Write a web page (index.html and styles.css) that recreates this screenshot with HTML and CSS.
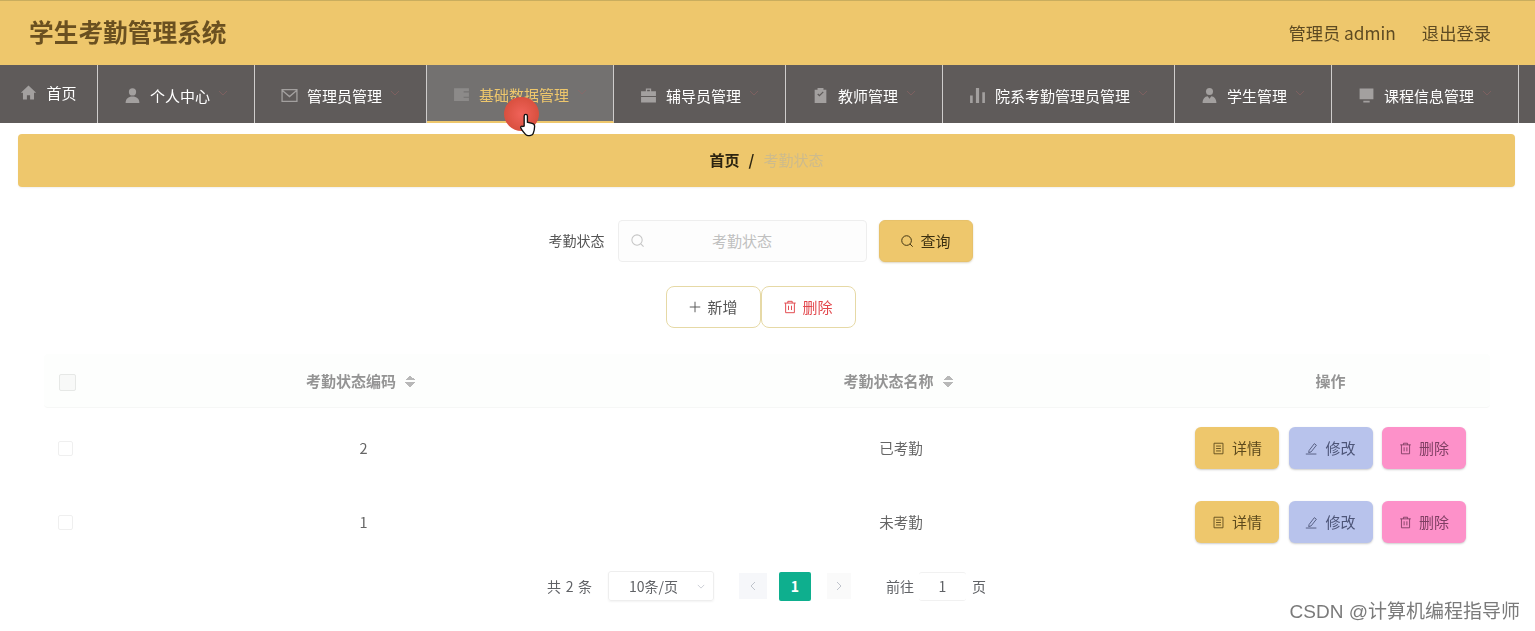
FILE: index.html
```html
<!DOCTYPE html>
<html lang="zh-CN">
<head>
<meta charset="utf-8">
<title>学生考勤管理系统</title>
<link rel="stylesheet" href="styles.css">
</head>
<body>
<svg class="sprite" aria-hidden="true">
  <symbol id="i-home" viewBox="0 0 16 16"><path fill="currentColor" d="M8 1.500 0.800 8.200h2V14.500h3.700v-4h3v4h3.700V8.200h2z"/></symbol>
  <symbol id="i-user" viewBox="0 0 16 16"><circle cx="8" cy="4.600" r="3.400" fill="currentColor"/><path fill="currentColor" d="M1.500 15c0-3.800 2.600-6 6.500-6s6.500 2.200 6.500 6z"/></symbol>
  <symbol id="i-mail" viewBox="0 0 16 16"><path fill="none" stroke="currentColor" stroke-width="1.200" d="M1 2.500h14v11H1zM1 3l7 6 7-6"/></symbol>
  <symbol id="i-data" viewBox="0 0 16 16"><path fill="currentColor" fill-rule="evenodd" d="M1 2h14v12H1zM10 5H15V6H10zM10 10H15V11H10z"/></symbol>
  <symbol id="i-case" viewBox="0 0 16 16"><path fill="currentColor" d="M5.500 1.500h5v2.500h4.500v4.500H1V4h4.500zM6.700 2.700V4h2.600V2.700zM1 9.500h14V14.500H1z"/></symbol>
  <symbol id="i-clip" viewBox="0 0 16 16"><path fill="currentColor" d="M2.500 2.500h2.700V1h5.600v1.500h2.700V15h-11zM5 7l2 2 4-4-.8-.8L7 7.400 5.800 6.200z"/></symbol>
  <symbol id="i-bars" viewBox="0 0 16 16"><path fill="currentColor" d="M1 8h2.500v7H1zM6.500 1h3v14h-3zM12.500 5H15v10h-2.500z"/></symbol>
  <symbol id="i-student" viewBox="0 0 16 16"><circle cx="8" cy="4.300" r="3.300" fill="currentColor"/><path fill="currentColor" d="M1.500 15c0-3.800 2-6 4.800-6.300L8 11l1.700-2.300c2.800.3 4.800 2.500 4.800 6.300z"/></symbol>
  <symbol id="i-screen" viewBox="0 0 16 16"><path fill="currentColor" d="M1.500 1.500h13v10h-13zM5 13h6v1.500H5z"/></symbol>
  <symbol id="i-search" viewBox="0 0 16 16"><circle cx="7.500" cy="7.500" r="5.500" fill="none" stroke="currentColor" stroke-width="1.100"/><path stroke="currentColor" stroke-width="1.100" d="m11.500 11.500 3 3"/></symbol>
  <symbol id="i-plus" viewBox="0 0 16 16"><path stroke="currentColor" stroke-width="1.100" d="M8 2v12M2 8h12"/></symbol>
  <symbol id="i-trash" viewBox="0 0 16 16"><path fill="none" stroke="currentColor" stroke-width="1.100" d="M1.500 3.500h13M5.500 3.500V1.500h5v2M3 3.500V14.500h10V3.500M6.300 6.500v5M9.700 6.500v5"/></symbol>
  <symbol id="i-doc" viewBox="0 0 16 16"><path fill="none" stroke="currentColor" stroke-width="1.100" d="M2.500 1.500h11v13h-11zM5 5h6M5 8h6M5 11h6"/></symbol>
  <symbol id="i-edit" viewBox="0 0 16 16"><path fill="none" stroke="currentColor" stroke-width="1.100" d="M5 10.500 11.500 2l2.500 2-6.500 8.200-3 .8zM1 14.800h13"/></symbol>
  <symbol id="i-chev" viewBox="0 0 10 6"><path fill="none" stroke="currentColor" stroke-width="1" d="m1 1 4 4 4-4"/></symbol>
</svg>

<header class="topbar">
  <h1 class="brand">学生考勤管理系统</h1>
  <div class="account">
    <span>管理员 admin</span>
    <a class="logout">退出登录</a>
  </div>
</header>

<nav class="menu">
  <a class="menu-item w-home"><svg class="mi"><use href="#i-home"/></svg><span>首页</span></a>
  <a class="menu-item w-157"><svg class="mi"><use href="#i-user"/></svg><span>个人中心</span><svg class="mc"><use href="#i-chev"/></svg></a>
  <a class="menu-item w-172"><svg class="mi"><use href="#i-mail"/></svg><span>管理员管理</span><svg class="mc"><use href="#i-chev"/></svg></a>
  <a class="menu-item w-187 active"><svg class="mi"><use href="#i-data"/></svg><span>基础数据管理</span><svg class="mc"><use href="#i-chev"/></svg></a>
  <a class="menu-item w-172"><svg class="mi"><use href="#i-case"/></svg><span>辅导员管理</span><svg class="mc"><use href="#i-chev"/></svg></a>
  <a class="menu-item w-157"><svg class="mi"><use href="#i-clip"/></svg><span>教师管理</span><svg class="mc"><use href="#i-chev"/></svg></a>
  <a class="menu-item w-232"><svg class="mi"><use href="#i-bars"/></svg><span>院系考勤管理员管理</span><svg class="mc"><use href="#i-chev"/></svg></a>
  <a class="menu-item w-157"><svg class="mi"><use href="#i-student"/></svg><span>学生管理</span><svg class="mc"><use href="#i-chev"/></svg></a>
  <a class="menu-item w-187"><svg class="mi"><use href="#i-screen"/></svg><span>课程信息管理</span><svg class="mc"><use href="#i-chev"/></svg></a>
</nav>

<main class="content">
  <div class="crumb"><b>首页</b><i>/</i><span>考勤状态</span></div>

  <form class="search">
    <label class="search-label">考勤状态</label>
    <div class="search-input"><svg class="si"><use href="#i-search"/></svg><span>考勤状态</span></div>
    <button class="btn-query" type="button"><svg class="bi"><use href="#i-search"/></svg>查询</button>
  </form>

  <div class="actions">
    <button class="btn-line" type="button"><svg class="bi"><use href="#i-plus"/></svg>新增</button>
    <button class="btn-line danger" type="button"><svg class="bi"><use href="#i-trash"/></svg>删除</button>
  </div>

  <section class="table">
    <div class="row head">
      <div class="cell"><span class="check big"></span></div>
      <div class="cell">考勤状态编码<span class="sort"></span></div>
      <div class="cell">考勤状态名称<span class="sort"></span></div>
      <div class="cell op">操作</div>
    </div>
    <div class="row">
      <div class="cell"><span class="check"></span></div>
      <div class="cell val">2</div>
      <div class="cell val">已考勤</div>
      <div class="cell op btns">
        <button class="rb yellow" type="button"><svg class="bi"><use href="#i-doc"/></svg>详情</button>
        <button class="rb blue" type="button"><svg class="bi"><use href="#i-edit"/></svg>修改</button>
        <button class="rb pink" type="button"><svg class="bi"><use href="#i-trash"/></svg>删除</button>
      </div>
    </div>
    <div class="row">
      <div class="cell"><span class="check"></span></div>
      <div class="cell val">1</div>
      <div class="cell val">未考勤</div>
      <div class="cell op btns">
        <button class="rb yellow" type="button"><svg class="bi"><use href="#i-doc"/></svg>详情</button>
        <button class="rb blue" type="button"><svg class="bi"><use href="#i-edit"/></svg>修改</button>
        <button class="rb pink" type="button"><svg class="bi"><use href="#i-trash"/></svg>删除</button>
      </div>
    </div>
  </section>

  <div class="pager">
    <span class="total">共 2 条</span>
    <div class="size">10条/页<svg class="sc"><use href="#i-chev"/></svg></div>
    <span class="pg prev"><svg class="pa" viewBox="0 0 8 12"><path fill="none" stroke="currentColor" d="M6 2 2 6l4 4"/></svg></span>
    <span class="cur">1</span>
    <span class="pg next"><svg class="pa" viewBox="0 0 8 12"><path fill="none" stroke="currentColor" d="m2 2 4 4-4 4"/></svg></span>
    <span class="goto">前往</span>
    <span class="goto-input">1</span>
    <span class="goto-end">页</span>
  </div>
</main>

<div class="pointer" aria-hidden="true">
  <span class="dot"></span>
  <svg class="hand" viewBox="0 0 20 26"><path fill="#fff" stroke="#111" stroke-width="1.400" d="M6.500 14V3.500a1.700 1.700 0 0 1 3.400 0V10l5 1.200c1.600.4 2.600 1.500 2.600 3.200 0 3-.5 5-1.500 7.600-.8 2-4 2.800-7 1.600-2-1-3.800-4-6-7.200-.8-1.400.8-2.800 2-1.800z"/></svg>
</div>
<div class="watermark">CSDN @计算机编程指导师</div>
</body>
</html>
```

FILE: styles.css
```css
* { box-sizing: border-box; }
html, body { margin: 0; padding: 0; }
body {
  width: 1535px;
  height: 631px;
  overflow: hidden;
  position: relative;
  background: #fff;
  color: #555;
  font-family: "Noto Sans CJK SC", "Noto Sans", sans-serif;
  font-size: 14px;
}
.sprite { display: none; }
.topbar, .menu, .content, .pointer { filter: blur(.5px); }

.topbar {
  height: 65px;
  background: #eec76c;
  border-top: 1px solid #c9ad5e;
  display: flex;
  align-items: center;
  justify-content: space-between;
  padding: 0 44px 0 29px;
}
.brand {
  margin: 0 0 3px;
  font-size: 24.700px;
  font-weight: 700;
  color: #6a5020;
  line-height: 1.2;
}
.account { display: flex; gap: 26px; font-size: 17.300px; color: #5d4a22; margin-bottom: 2px; }

.menu {
  height: 58px;
  background: #5f5b5a;
  display: flex;
  color: #fff;
  font-size: 15px;
}
.menu-item {
  display: flex;
  align-items: center;
  justify-content: center;
  height: 58px;
  border-right: 1px solid #cfcdcc;
  padding-top: 2px;
}
.w-home { width: 98px; padding-top: 0; padding-bottom: 3px; }
.w-157 { width: 157px; }
.w-172 { width: 172px; }
.w-187 { width: 187px; }
.w-232 { width: 232px; }
.menu-item.active {
  background: #737170;
  color: #eec76c;
  border-bottom: 2px solid #eec76c;
}
.mi { width: 17px; height: 17px; color: #a3a09f; margin-right: 9px; flex: none; }
.active .mi { color: #8c8a89; }
.mc { width: 10px; height: 6px; color: #7d6060; margin-left: 8px; margin-bottom: 4px; flex: none; }
.active .mc { color: #856a6a; }

.content { padding: 11px 20px 0 18px; }
.crumb {
  height: 53px;
  background: #eec76c;
  border-radius: 4px;
  display: flex;
  align-items: center;
  justify-content: center;
  font-size: 15px;
  color: #2c2410;
  padding-bottom: 3px;
  box-shadow: 0 1px 2px rgba(0, 0, 0, .06);
}
.crumb b { font-weight: 700; }
.crumb i { font-style: normal; margin: 0 9px; font-weight: 700; }
.crumb span { color: #cdbb8c; }

.search {
  display: flex;
  align-items: center;
  justify-content: center;
  margin-top: 33px;
  padding-right: 12px;
  height: 42px;
}
.search-label { font-size: 14px; color: #555; margin-right: 13px; padding-bottom: 2px; }
.search-input {
  width: 249px;
  height: 42px;
  border: 1px solid #eeeeee;
  border-radius: 4px;
  background: #fdfdfd;
  display: flex;
  align-items: center;
  justify-content: center;
  position: relative;
  color: #c0c0c0;
  font-size: 15px;
  padding-bottom: 2px;
}
.si { width: 15px; height: 15px; color: #c5c5c5; position: absolute; left: 11px; top: 12px; }
.btn-query {
  width: 94px;
  height: 42px;
  margin-left: 12px;
  padding: 0 0 2px;
  border: 1px solid #e7c16a;
  border-radius: 6px;
  background: #eec76c;
  color: #3c3010;
  font: inherit;
  font-size: 15px;
  display: flex;
  align-items: center;
  justify-content: center;
  box-shadow: 0 1px 2px rgba(120, 90, 20, .25);
}
.bi { width: 14px; height: 14px; margin: 2px 6px 0 0; flex: none; }

.actions {
  display: flex;
  justify-content: center;
  margin-top: 24px;
  padding-right: 12px;
  height: 42px;
}
.btn-line {
  width: 95px;
  height: 42px;
  padding: 0 0 2px;
  border: 1px solid #e6d9a6;
  border-radius: 8px;
  background: #fff;
  color: #555;
  font: inherit;
  font-size: 15px;
  display: flex;
  align-items: center;
  justify-content: center;
}
.btn-line .bi { margin-right: 5px; }
.btn-line.danger { color: #e2474c; }

.table { margin: 26px 25px 0 26px; width: 1446px; }
.row {
  display: grid;
  grid-template-columns: 46px 547px 528px 325px;
  height: 74px;
  align-items: center;
  text-align: center;
}
.row.head {
  height: 54px;
  background: #fdfefd;
  border-bottom: 1px solid #f6f7f6;
  margin-bottom: 3px;
  color: #949494;
  font-size: 15px;
  font-weight: 700;
  border-radius: 4px;
}
.cell { display: flex; align-items: center; justify-content: center; }
.cell.op { padding-left: 6px; }
.val { color: #666; font-size: 14.500px; padding-bottom: 2px; }
.check {
  width: 15px;
  height: 15px;
  border: 1px solid #efefef;
  border-radius: 2px;
  margin-right: 4px;
  background: #fff;
}
.check.big { width: 17px; height: 17px; margin: 3px 0 0 1px; background: #f8f9f8; border-color: #e6e8e6; }
.sort {
  display: inline-block;
  width: 10px;
  height: 12px;
  margin-left: 9px;
  margin-right: 6px;
  background:
    conic-gradient(from 135deg at 50% 0, #b8b8b8 90deg, transparent 0) 0 0 / 100% 5px no-repeat,
    conic-gradient(from -45deg at 50% 100%, #b8b8b8 90deg, transparent 0) 0 100% / 100% 5px no-repeat;
}
.btns { gap: 9.500px; font-size: 15px; font-weight: 400; }
.rb {
  width: 84px;
  height: 42px;
  padding: 0 0 2px;
  border: none;
  border-radius: 6px;
  font: inherit;
  display: flex;
  align-items: center;
  justify-content: center;
  box-shadow: 0 1px 2px rgba(90, 90, 90, .3);
}
.rb .bi { width: 13px; height: 13px; margin-right: 7px; }
.yellow { background: #eec76c; color: #5d4a1c; }
.blue { background: #b8c3ec; color: #4d5578; }
.pink { background: #fd91c9; color: #7f3f63; }

.pager {
  display: flex;
  align-items: center;
  height: 30px;
  margin-top: 12px;
  padding-left: 529px;
  font-size: 14px;
  color: #606266;
}
.total { width: 61px; white-space: nowrap; word-spacing: 1.500px; }
.size {
  width: 106px;
  height: 30px;
  border: 1px solid #eeeeee;
  border-radius: 3px;
  display: flex;
  align-items: center;
  justify-content: space-between;
  padding: 0 8px 0 20px;
  box-shadow: 0 1px 2px rgba(0, 0, 0, .05);
}
.sc { width: 8px; height: 5px; color: #c0c4cc; }
.pg {
  width: 28px;
  height: 26px;
  background: #f6f7fa;
  display: flex;
  align-items: center;
  justify-content: center;
  color: #c0c4cc;
}
.prev { margin-left: 25px; }
.next { width: 24px; background: #fafafa; }
.pa { width: 8px; height: 12px; }
.cur {
  width: 32px;
  height: 29px;
  margin: 0 16px 0 12px;
  background: #0eaf8e;
  color: #fff;
  font-weight: 700;
  border-radius: 2px;
  display: flex;
  align-items: center;
  justify-content: center;
}
.goto { margin-left: 35px; width: 33px; white-space: nowrap; }
.goto-input {
  width: 47px;
  height: 29px;
  border-top: 1px solid #f1f1f1;
  border-bottom: 1px solid #f1f1f1;
  border-radius: 3px;
  display: flex;
  align-items: center;
  justify-content: center;
}
.goto-end { margin-left: 6px; }

.pointer { position: absolute; left: 501px; top: 94px; width: 40px; height: 46px; }
.dot {
  position: absolute;
  left: 3px;
  top: 3px;
  width: 35px;
  height: 34px;
  border-radius: 50%;
  background: radial-gradient(circle, #f0635a 0, #d9503f 70%, rgba(217, 80, 63, .8) 100%);
}
.hand { position: absolute; left: 17px; top: 18px; width: 19px; height: 26px; }
.watermark {
  position: absolute;
  right: 15px;
  bottom: 8px;
  color: #7a7a7a;
  font-family: "Liberation Sans", "Noto Sans CJK SC", sans-serif;
  font-size: 19px;
  line-height: 22px;
  white-space: nowrap;
}
```
